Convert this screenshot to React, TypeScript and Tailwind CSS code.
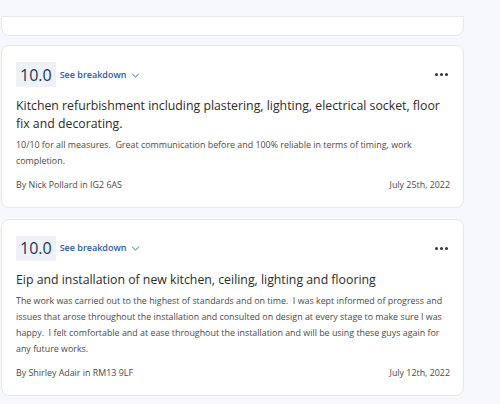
import React from "react";

function Chevron() {
  return (
    <svg width="9" height="9" viewBox="0 0 12 12" className="ml-[4px] mt-[1px]" fill="none">
      <path d="M2 4.2 L6 8 L10 4.2" stroke="#2a5ca8" strokeWidth="1.3" strokeLinecap="round" strokeLinejoin="round" />
    </svg>
  );
}

function Card({ title, body, author, date }: { title: string; body: string; author: string; date: string }) {
  return (
    <div className="ml-[1px] w-[463px] bg-white border border-[#e6e8ee] rounded-[8px] pl-[14px] pr-[13px] pt-[16px] pb-[15px]">
      <div className="flex items-center justify-between">
        <div className="flex items-center">
          <div className="bg-[#eef2f7] h-[25px] px-[4px] flex items-center text-[16px] text-[#17365c] leading-none font-medium">10.0</div>
          <div className="ml-[4px] flex items-center text-[9px] font-semibold text-[#2a5ca8]">
            See breakdown
            <Chevron />
          </div>
        </div>
        <div className="flex gap-[2px] mr-[2px]">
          <span className="w-[3px] h-[3px] rounded-full bg-[#333]" />
          <span className="w-[3px] h-[3px] rounded-full bg-[#333]" />
          <span className="w-[3px] h-[3px] rounded-full bg-[#333]" />
        </div>
      </div>
      <div className="mt-[10px] text-[12.3px] leading-[18px] text-[#2b2b2b] font-medium">{title}</div>
      <div className="mt-[4px] text-[8.9px] leading-[16.3px] text-[#4a4a4a] whitespace-pre-wrap">{body}</div>
      <div className="mt-[8px] flex justify-between text-[8.9px] leading-[14px] text-[#4a4a4a]">
        <span>{author}</span>
        <span>{date}</span>
      </div>
    </div>
  );
}

export default function App() {
  return (
    <div className="w-[500px] h-[404px] bg-[#f7f8fc] overflow-hidden" style={{ fontFamily: '"Open Sans", "Noto Sans", sans-serif' }}>
      <div className="pt-[16px]">
        <div className="ml-[1px] w-[463px] h-[20px] bg-white border border-[#e6e8ee] rounded-b-[8px]" />
      </div>
      <div className="mt-[9px] flex flex-col gap-[11px]">
        <Card
          title="Kitchen refurbishment including plastering, lighting, electrical socket, floor fix and decorating."
          body="10/10 for all measures.  Great communication before and 100% reliable in terms of timing, work completion."
          author="By Nick Pollard in IG2 6AS"
          date="July 25th, 2022"
        />
        <Card
          title="Eip and installation of new kitchen, ceiling, lighting and flooring"
          body="The work was carried out to the highest of standards and on time.  I was kept informed of progress and issues that arose throughout the installation and consulted on design at every stage to make sure I was happy.  I felt comfortable and at ease throughout the installation and will be using these guys again for any future works."
          author="By Shirley Adair in RM13 9LF"
          date="July 12th, 2022"
        />
      </div>
    </div>
  );
}
